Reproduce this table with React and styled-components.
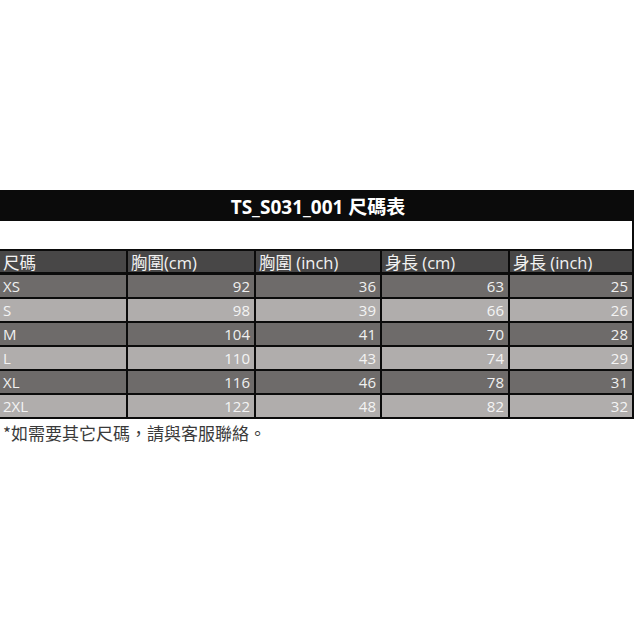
import React from "react";
import styled, { createGlobalStyle } from "styled-components";

const Global = createGlobalStyle`
  html, body { margin: 0; padding: 0; background: #ffffff; }
  body { font-family: "Open Sans", "Noto Sans CJK TC", sans-serif; }
`;

const Page = styled.div`
  width: 637px;
  height: 637px;
  padding-top: 190px;
  box-sizing: border-box;
`;

const Sheet = styled.div`
  width: 634px;
`;

const TitleBar = styled.div`
  height: 31px;
  background: #0b0b0b;
  color: #ffffff;
  font-weight: 700;
  font-size: 19px;
  display: flex;
  align-items: center;
  justify-content: center;
  padding-left: 2px;
`;

const BlankRow = styled.div`
  height: 28px;
  background: #ffffff;
  border-right: 2px solid #0b0b0b;
`;

const Grid = styled.div`
  display: grid;
  grid-template-columns: 126px 126px 124px 126px 122px;
  grid-template-rows: 22px repeat(6, 22px);
  column-gap: 2px;
  row-gap: 2px;
  background: #0b0b0b;
  padding: 2px 2px 2px 0;
  & > :nth-child(-n + 5) { margin-bottom: 1px; }
`;

const HeadCell = styled.div`
  background: #484747;
  color: #f2f2f2;
  font-size: 16.5px;
  display: flex;
  align-items: center;
  padding-left: 3px;
  white-space: nowrap;
`;

const Cell = styled.div`
  background: ${(p) => (p.$light ? "#b0adac" : "#6e6b6a")};
  color: ${(p) => (p.$light ? "#f4f4f4" : "#f0f0f0")};
  font-size: 15px;
  display: flex;
  align-items: center;
  justify-content: ${(p) => (p.$left ? "flex-start" : "flex-end")};
  padding: 0 4px 0 3px;
`;

const Note = styled.div`
  margin-top: 3px;
  padding-left: 3px;
  font-family: "Noto Sans CJK TC", sans-serif;
  font-size: 17px;
  color: #3a3a3a;
  line-height: 22px;
`;

const headers = ["尺碼", "胸圍(cm)", "胸圍 (inch)", "身長 (cm)", "身長 (inch)"];
const rows = [
  ["XS", 92, 36, 63, 25],
  ["S", 98, 39, 66, 26],
  ["M", 104, 41, 70, 28],
  ["L", 110, 43, 74, 29],
  ["XL", 116, 46, 78, 31],
  ["2XL", 122, 48, 82, 32],
];

export default function App() {
  return (
    <Page>
      <Global />
      <Sheet>
        <TitleBar>TS_S031_001 尺碼表</TitleBar>
        <BlankRow />
        <Grid>
          {headers.map((h) => (
            <HeadCell key={h}>{h}</HeadCell>
          ))}
          {rows.map((r, i) =>
            r.map((v, j) => (
              <Cell key={`${i}-${j}`} $light={i % 2 === 1} $left={j === 0}>
                {v}
              </Cell>
            ))
          )}
        </Grid>
      </Sheet>
      <Note>*如需要其它尺碼，請與客服聯絡。</Note>
    </Page>
  );
}
